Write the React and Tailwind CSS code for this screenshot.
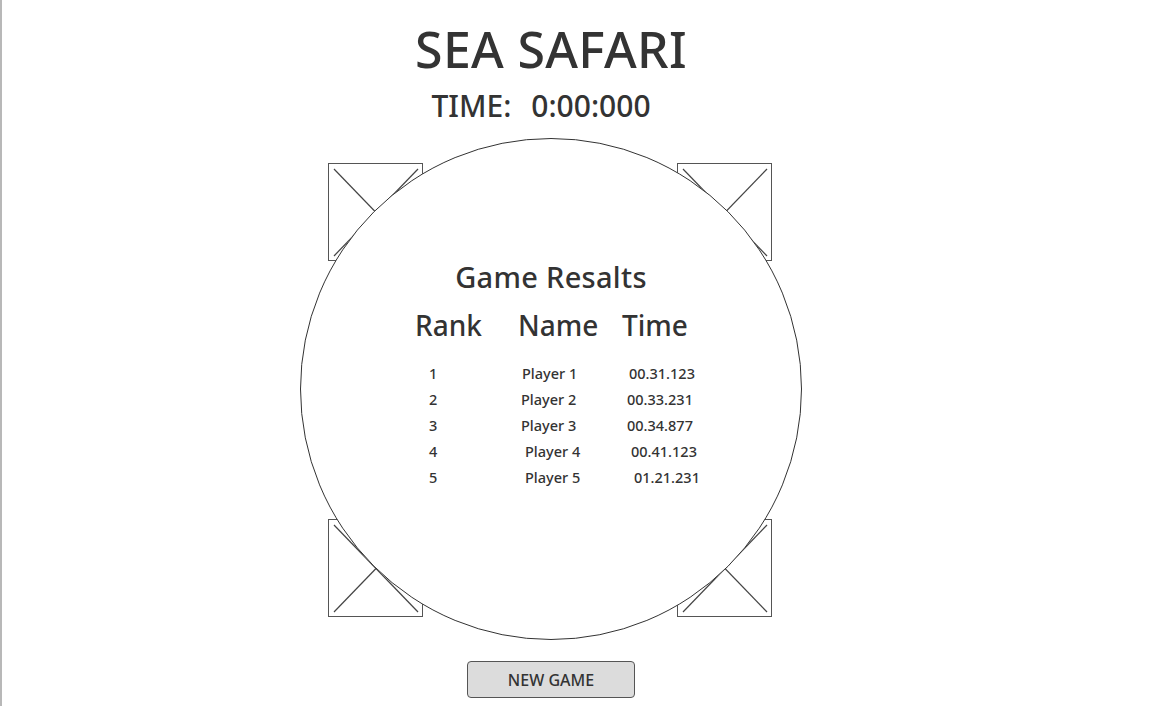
import React from "react";

function PlaceholderBox() {
  return (
    <div className="relative w-[95px] h-[98px] border border-[#555] bg-white">
      <svg className="absolute inset-0" width="93" height="96" viewBox="0 0 93 96">
        <line x1="5" y1="5" x2="89" y2="92" stroke="#444" strokeWidth="1.2" />
        <line x1="89" y1="5" x2="5" y2="92" stroke="#444" strokeWidth="1.2" />
      </svg>
    </div>
  );
}

const rows = [
  { rank: "1", name: "Player 1", time: "00.31.123", nx: "ml-[0px]", tx: "ml-[0px]" },
  { rank: "2", name: "Player 2", time: "00.33.231", nx: "ml-[-1px]", tx: "ml-[-1px]" },
  { rank: "3", name: "Player 3", time: "00.34.877", nx: "ml-[-1px]", tx: "ml-[-1px]" },
  { rank: "4", name: "Player 4", time: "00.41.123", nx: "ml-[3px]", tx: "ml-[-1px]" },
  { rank: "5", name: "Player 5", time: "01.21.231", nx: "ml-[3px]", tx: "ml-[2px]" },
];

export default function App() {
  return (
    <div
      className="h-[706px] w-full overflow-hidden bg-white border-l-2 border-[#b8b8b8] text-[#333]"
      style={{ fontFamily: '"Noto Sans", "Open Sans", sans-serif' }}
    >
      <div className="w-[1098px] flex flex-col items-center">
        <h1 className="mt-[24px] text-[50px] leading-none font-medium tracking-[0.3px]">SEA SAFARI</h1>
        <div className="mt-[17px] mr-[20px] flex gap-[20px] text-[30px] leading-none font-medium">
          <span>TIME:</span>
          <span>0:00:000</span>
        </div>

        <div className="relative mt-[17px] w-[502px] h-[502px]">
          <div className="absolute left-[28px] right-[30px] top-[25px] bottom-[23px] flex flex-col justify-between">
            <div className="flex justify-between">
              <PlaceholderBox />
              <PlaceholderBox />
            </div>
            <div className="flex justify-between">
              <PlaceholderBox />
              <PlaceholderBox />
            </div>
          </div>
          <div className="absolute inset-0 rounded-full border border-[#333] bg-white flex flex-col">
            <div className="mt-[123px] text-center text-[29px] leading-none font-medium tracking-[0.3px]">Game Resalts</div>
            <div className="mt-[20px] ml-[114px] flex text-[28px] leading-none font-medium">
              <span className="w-[103px]">Rank</span>
              <span className="w-[104px]">Name</span>
              <span>Time</span>
            </div>
            <div className="mt-[22px] ml-[128px] flex flex-col text-[14.5px] font-medium">
              {rows.map((r) => (
                <div key={r.rank} className="flex h-[26px] items-center">
                  <span className="w-[93px]">{r.rank}</span>
                  <span className={`w-[107px] ${r.nx}`}>{r.name}</span>
                  <span className={r.tx}>{r.time}</span>
                </div>
              ))}
            </div>
          </div>
        </div>

        <button className="mt-[21px] w-[168px] h-[37px] rounded-[4px] border border-[#555] bg-[#dcdcdc] text-[16px] font-medium text-[#333]">
          NEW GAME
        </button>
      </div>
    </div>
  );
}
